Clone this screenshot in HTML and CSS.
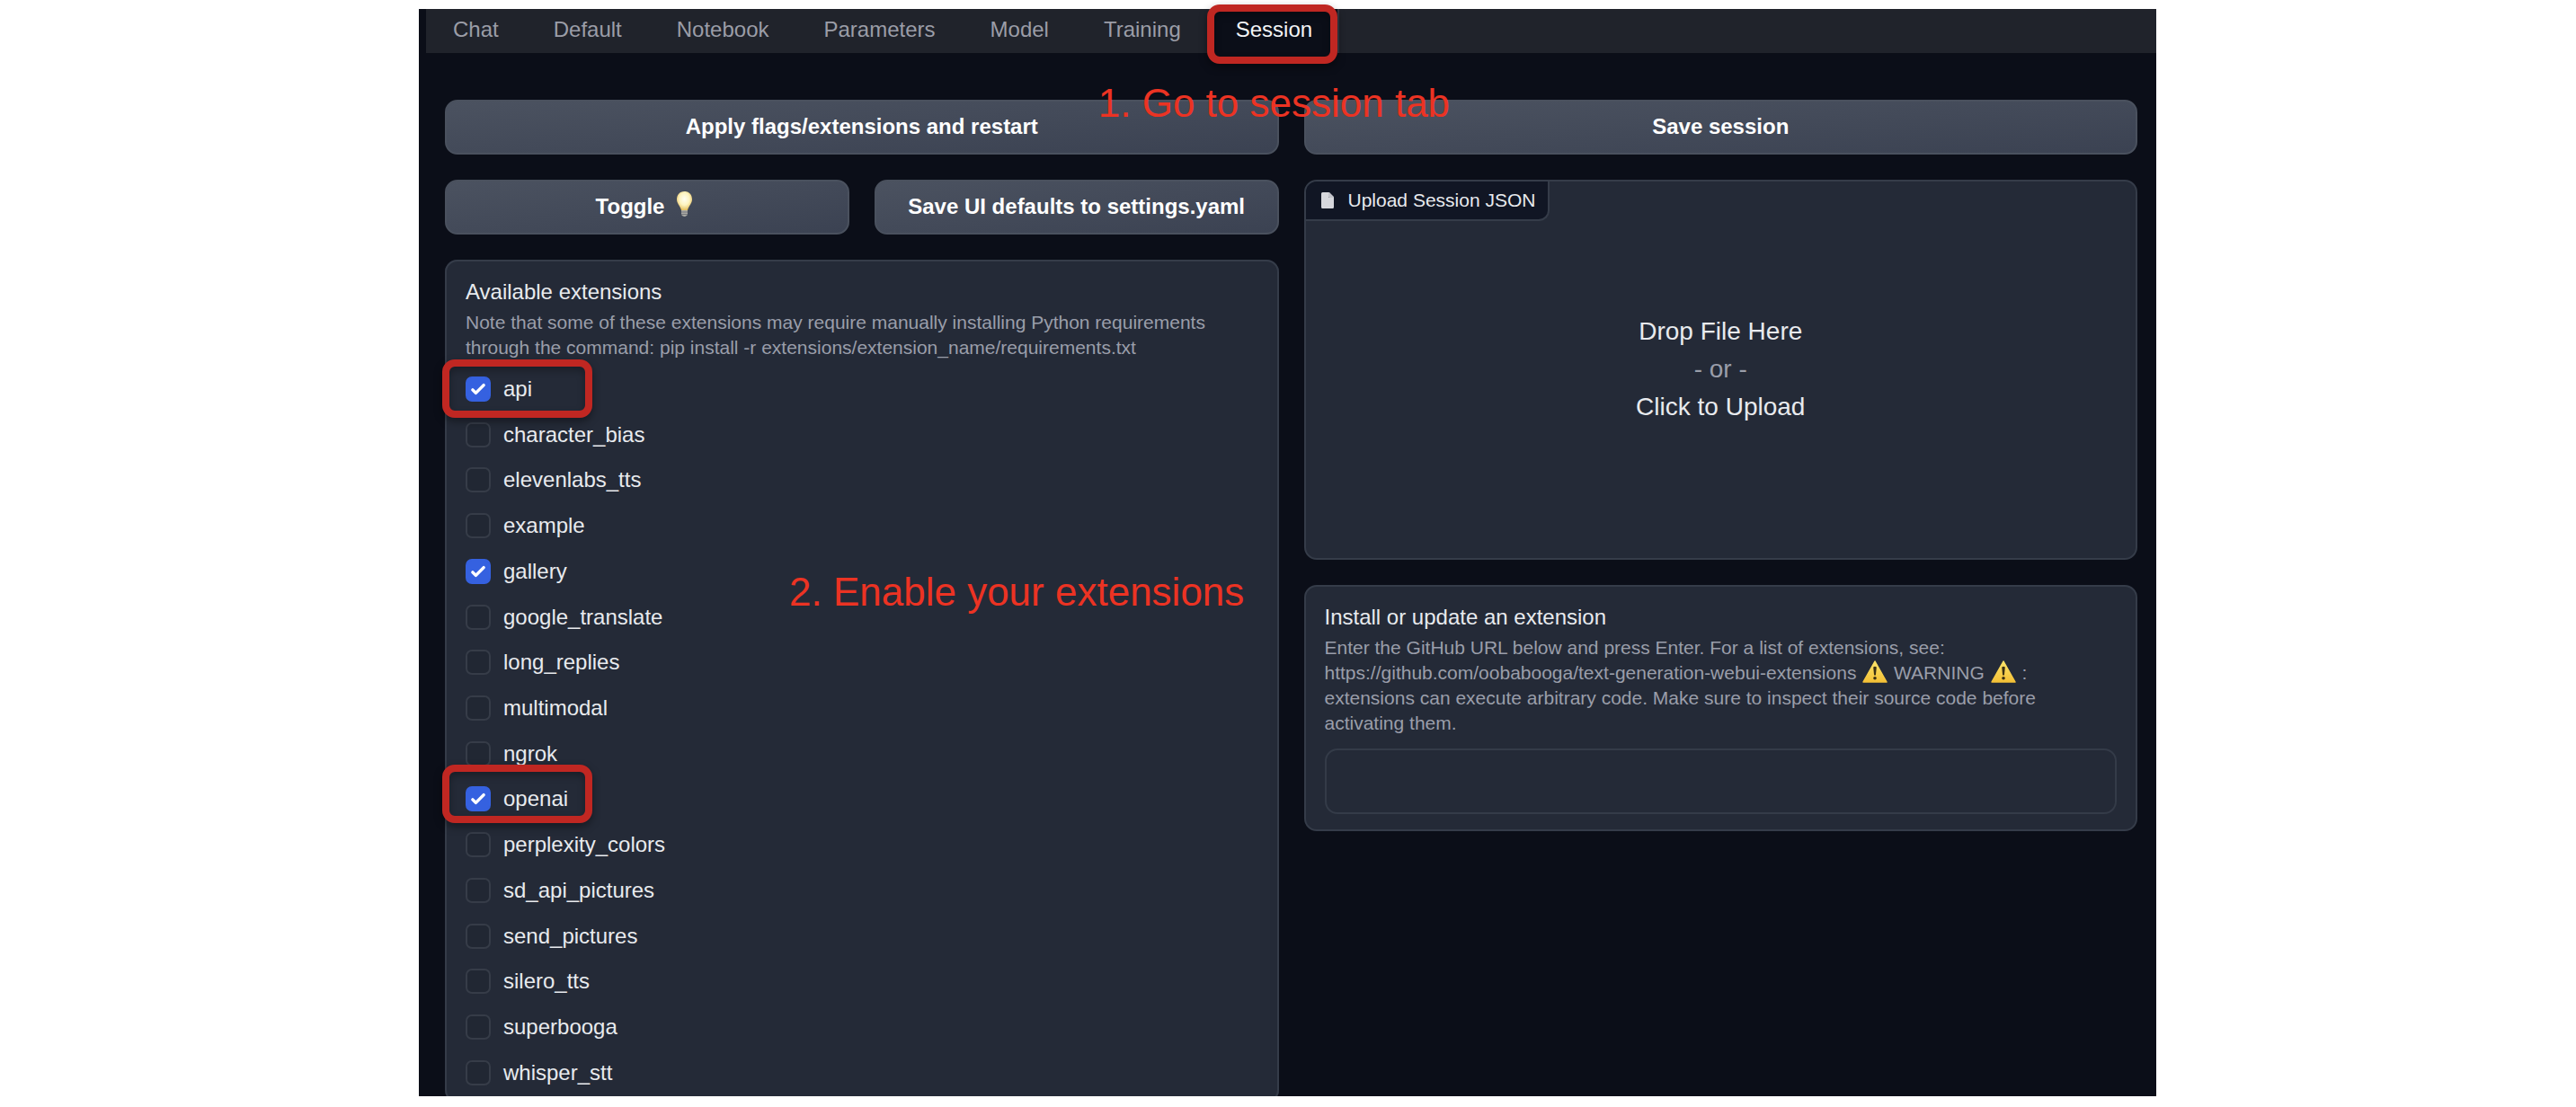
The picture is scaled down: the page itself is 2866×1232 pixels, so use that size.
FILE: index.html
```html
<!DOCTYPE html>
<html lang="en">
<head>
<meta charset="utf-8">
<title>Session</title>
<link rel="stylesheet" href="styles.css">
</head>
<body>
<svg class="defs" aria-hidden="true">
  <defs>
    <linearGradient id="amber" x1="0" y1="0" x2="0" y2="1"><stop offset="0" stop-color="#fbe36a"/><stop offset="1" stop-color="#f4c136"/></linearGradient>
    <radialGradient id="glow" cx=".5" cy=".4" r=".6"><stop offset="0" stop-color="#fffef2"/><stop offset=".55" stop-color="#fdf3c0"/><stop offset="1" stop-color="#e3bd5c"/></radialGradient>
    <symbol id="warning" viewBox="0 0 30 26"><path d="M15 2 L28 25 H2 Z" fill="url(#amber)" stroke="url(#amber)" stroke-width="1.5" stroke-linejoin="round"/><path d="M13.2 8.5 Q15 7 16.8 8.5 L15.9 17.5 H14.1 Z" fill="#3a3014"/><circle cx="15" cy="20.8" r="1.8" fill="#3a3014"/></symbol>
  </defs>
</svg>
<main class="app">
  <nav class="tabs">
    <button class="tab">Chat</button>
    <button class="tab">Default</button>
    <button class="tab">Notebook</button>
    <button class="tab">Parameters</button>
    <button class="tab">Model</button>
    <button class="tab">Training</button>
    <div class="tab-wrap">
      <button class="tab active">Session</button>
      <span class="mark mark-tab"></span>
      <span class="note note-tab">1. Go to session tab</span>
    </div>
  </nav>
  <div class="columns">
    <section class="column">
      <button class="btn">Apply flags/extensions and restart</button>
      <div class="row">
        <button class="btn">Toggle <svg class="bulb" viewBox="0 0 31 30" aria-hidden="true"><path d="M15.500 1 C10 1 7 5 7 10 C7 14.500 10.500 16.500 12 22 H19 C20.500 16.500 24 14.500 24 10 C24 5 21 1 15.500 1 Z" fill="url(#glow)"/><path d="M12 22 H19 V27 Q15.500 31 12 27 Z" fill="#a9a9a4"/><path d="M12 24 H19 M12 26.500 H19" stroke="#74757a" stroke-width="1"/></svg></button>
        <button class="btn">Save UI defaults to settings.yaml</button>
      </div>
      <fieldset class="panel extensions">
        <h2 class="title">Available extensions</h2>
        <p class="info">Note that some of these extensions may require manually installing Python requirements through the command: pip install -r extensions/extension_name/requirements.txt</p>
        <div class="list">
          <label class="item"><input type="checkbox" checked>api<span class="mark mark-item"></span></label>
          <label class="item"><input type="checkbox">character_bias</label>
          <label class="item"><input type="checkbox">elevenlabs_tts</label>
          <label class="item"><input type="checkbox">example</label>
          <label class="item"><input type="checkbox" checked>gallery</label>
          <label class="item"><input type="checkbox">google_translate</label>
          <label class="item"><input type="checkbox">long_replies</label>
          <label class="item"><input type="checkbox">multimodal</label>
          <label class="item"><input type="checkbox">ngrok</label>
          <label class="item"><input type="checkbox" checked>openai<span class="mark mark-item mark-raised"></span></label>
          <label class="item"><input type="checkbox">perplexity_colors</label>
          <label class="item"><input type="checkbox">sd_api_pictures</label>
          <label class="item"><input type="checkbox">send_pictures</label>
          <label class="item"><input type="checkbox">silero_tts</label>
          <label class="item"><input type="checkbox">superbooga</label>
          <label class="item"><input type="checkbox">whisper_stt</label>
        </div>
        <span class="note note-list">2. Enable your extensions</span>
      </fieldset>
    </section>
    <section class="column">
      <button class="btn">Save session</button>
      <div class="panel upload">
        <div class="upload-label"><svg class="file" viewBox="0 0 14 18" aria-hidden="true"><path d="M1.500 0 H8 V4.500 Q8 6 9.500 6 H14 V16.500 Q14 18 12.500 18 H1.500 Q0 18 0 16.500 V1.500 Q0 0 1.500 0 Z" fill="#d6d7dc"/><path d="M8 0 H9 L14 5 V6 H9.500 Q8 6 8 4.500 Z" fill="#c3c4ca"/></svg>Upload Session JSON</div>
        <button class="drop"><span>Drop File Here</span><span class="or">- or -</span><span>Click to Upload</span></button>
      </div>
      <div class="panel">
        <label class="title" for="install">Install or update an extension</label>
        <p class="info">Enter the GitHub URL below and press Enter. For a list of extensions, see: https://github.com/oobabooga/text-generation-webui-extensions <svg class="warn" role="img" aria-label="warning"><use href="#warning"/></svg> WARNING <svg class="warn" role="img" aria-label="warning"><use href="#warning"/></svg> : extensions can execute arbitrary code. Make sure to inspect their source code before activating them.</p>
        <input class="field" id="install" type="text">
      </div>
    </section>
  </div>
</main>
</body>
</html>
```
FILE: styles.css
```css
* { box-sizing: border-box; }

body {
  margin: 0;
  height: 100vh;
  padding: 10px 0 12px;
  display: grid;
  grid-template-columns: 466fr 1933fr 467fr;
  grid-template-rows: minmax(0, 1fr);
  overflow: hidden;
  background: #fff;
  font: 24px/28px "Liberation Sans", Arial, sans-serif;
  color: #e8eaee;
}

button, input { font: inherit; color: inherit; }
.defs { position: absolute; width: 0; height: 0; }

/* The clip leaves room above for the tab's marker */
.app {
  grid-column: 2;
  padding-left: 8px;
  background: #0b0e18;
  clip-path: inset(-10px 0 0 0);
}

.tabs { display: flex; gap: 1px; height: 49px; background: #20232b; }
.tab {
  padding: 0 28px 3px;
  border: 0 solid transparent;
  border-width: 0 2px;
  background: none;
  color: #9b9da7;
}
.tab-wrap { position: relative; display: flex; }
.tab.active { background: #0b0e18; border-color: #343944; color: #f3f4f6; }

.columns {
  display: grid;
  grid-template-columns: 1fr 1fr;
  gap: 28px;
  padding: 52px 21px 0;
}
.column { display: flex; flex-direction: column; gap: 28px; min-width: 0; }
.row { display: grid; grid-template-columns: 1fr 1fr; gap: 28px; }

.btn {
  height: 61px;
  padding: 0 10px 2px;
  border: 2px solid #4a515e;
  border-radius: 14px;
  background: linear-gradient(to bottom right, #4b5260, #3b4252);
  color: #fff;
  font-weight: 700;
}
.bulb { width: 31px; height: 30px; margin: -6px 0; vertical-align: 2px; }

.panel {
  position: relative;
  margin: 0;
  min-width: 0;
  padding: 21px 21px 17px;
  border: 2px solid #353c49;
  border-radius: 14px;
  background: #242a37;
}
.title { display: block; margin: 0 0 8px; font-size: 24px; font-weight: 400; line-height: 25px; }
.info { margin: 0; font-size: 21px; line-height: 28px; color: #9a9eaa; }
.warn { width: 30px; height: 26px; margin: -4px 0; vertical-align: 0; }

.list {
  display: flex;
  flex-direction: column;
  justify-content: space-between;
  min-height: 789px;
  margin-top: 18px;
}
.item { position: relative; display: flex; gap: 14px; }
.item input {
  appearance: none;
  width: 28px;
  height: 28px;
  margin: 0;
  border: 2px solid #363c48;
  border-radius: 7px;
  background: #212733;
}
.item input:checked {
  border-color: #3561e0;
  background: #3561e0 url("data:image/svg+xml,%3Csvg xmlns='http://www.w3.org/2000/svg' viewBox='0 0 16 16'%3E%3Cpath d='M12.207 4.793a1 1 0 0 1 0 1.414l-5 5a1 1 0 0 1-1.414 0l-2-2a1 1 0 0 1 1.414-1.414L6.500 9.086l4.293-4.293a1 1 0 0 1 1.414 0z' fill='white'/%3E%3C/svg%3E") center / 28px 28px no-repeat;
}

.upload { height: 423px; padding: 0; display: flex; flex-direction: column; overflow: hidden; }
.upload-label {
  align-self: flex-start;
  display: flex;
  align-items: center;
  gap: 16px;
  height: 44px;
  padding: 0 14px 0 17px;
  border: solid #353c49;
  border-width: 0 2px 2px 0;
  border-bottom-right-radius: 12px;
  background: #111624;
  font-size: 21px;
}
.file { width: 14px; height: 18px; }
.drop {
  flex: 1;
  display: flex;
  flex-direction: column;
  align-items: center;
  justify-content: center;
  padding: 0 0 46px;
  border: 0;
  background: none;
  font-size: 28px;
  line-height: 42px;
}
.or { color: #9a9eaa; }

.field {
  display: block;
  width: 100%;
  height: 73px;
  margin-top: 14px;
  padding: 0 18px;
  border: 2px solid #343b48;
  border-radius: 14px;
  background: #242a37;
}

/* Red walkthrough markers and captions */
.mark {
  position: absolute;
  z-index: 1;
  border: 8px solid #c02722;
  border-radius: 14px;
  box-shadow: 0 4px 10px rgba(0, 0, 0, .4), inset 0 4px 8px rgba(0, 0, 0, .3);
  pointer-events: none;
}
.mark-tab { inset: -5px 2px -12px -2px; }
.mark-item { left: -26px; top: -19px; width: 167px; height: 65px; }
.mark-raised { top: -24px; }
.note {
  position: absolute;
  z-index: 2;
  font-size: 44px;
  line-height: 50px;
  color: #ec3323;
  white-space: nowrap;
}
.note-tab { left: -123px; top: 80px; }
.note-list { left: 381px; top: 343px; }
```
